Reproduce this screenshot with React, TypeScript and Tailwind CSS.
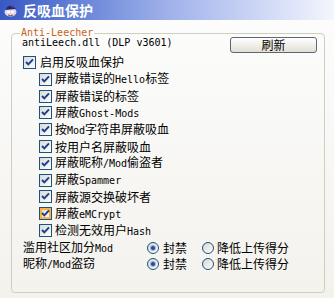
import { useId } from "react"

const subItems = [
  { label: "屏蔽错误的Hello标签" },
  { label: "屏蔽错误的标签" },
  { label: "屏蔽Ghost-Mods" },
  { label: "按Mod字符串屏蔽吸血" },
  { label: "按用户名屏蔽吸血" },
  { label: "屏蔽昵称/Mod偷盗者" },
  { label: "屏蔽Spammer" },
  { label: "屏蔽源交换破坏者" },
  { label: "屏蔽eMCrypt", hover: true },
  { label: "检测无效用户Hash" },
]

// ASCII runs use a narrow mono font, CJK stays at 12px
function Mixed({ text }: { text: string }) {
  const parts = text.split(/([\x20-\x7e]+)/).filter(Boolean)
  return (
    <>
      {parts.map((p, i) =>
        /[\x20-\x7e]/.test(p[0]) ? (
          <span key={i} className="font-['DejaVu_Sans_Mono',monospace] text-[10px] leading-[12px]">
            {p}
          </span>
        ) : (
          <span key={i}>{p}</span>
        )
      )}
    </>
  )
}

function CheckBox({ hover = false }: { hover?: boolean }) {
  const id = useId()
  return (
    <svg width="13" height="13" viewBox="0 0 13 13" className="shrink-0">
      <defs>
        <linearGradient id={id} x1="0" y1="0" x2="1" y2="1">
          <stop offset="0" stopColor="#d8d8d2" />
          <stop offset="1" stopColor="#ffffff" />
        </linearGradient>
      </defs>
      <rect x="0.5" y="0.5" width="12" height="12" fill={`url(#${id})`} stroke="#1c5180" />
      {hover && <rect x="2" y="2" width="9" height="9" fill="none" stroke="#f7b540" strokeWidth="2" />}
      <path d="M3 6 L5.3 8.4 L10 3.4" fill="none" stroke="#213d8f" strokeWidth="2" />
    </svg>
  )
}

function Radio({ checked }: { checked: boolean }) {
  const id = useId()
  return (
    <svg width="12" height="12" viewBox="0 0 12 12" className="shrink-0">
      <defs>
        <linearGradient id={id} x1="0" y1="0" x2="1" y2="1">
          <stop offset="0" stopColor="#d6d6cf" />
          <stop offset="1" stopColor="#ffffff" />
        </linearGradient>
      </defs>
      <circle cx="6" cy="6" r="5.5" fill={`url(#${id})`} stroke="#1c5180" />
      {checked && (
        <>
          <circle cx="6" cy="6" r="3" fill="#9db5de" />
          <circle cx="6" cy="6" r="2" fill="#2a4a92" />
        </>
      )}
    </svg>
  )
}

function RadioRow({ label }: { label: string }) {
  return (
    <div className="flex items-center h-[16px]">
      <div className="w-[135px] pl-[11px]">
        <Mixed text={label} />
      </div>
      <div className="flex items-center gap-[4px] w-[55px]">
        <Radio checked />
        <span>封禁</span>
      </div>
      <div className="flex items-center gap-[3px]">
        <Radio checked={false} />
        <span>降低上传得分</span>
      </div>
    </div>
  )
}

export default function App() {
  return (
    <div className="w-[334px] h-[298px] overflow-hidden bg-gradient-to-b from-[#fdfdfd] to-[#f3f2ed] text-[12px] leading-[12px] text-black font-['Noto_Sans_CJK_SC',sans-serif]">
      {/* Title bar */}
      <div className="h-[20px] flex items-center gap-[5px] pl-[3px] bg-gradient-to-r from-[#3858c4] via-[#9fb1ea] to-[#f4f6fd]">
        <svg width="15" height="14" viewBox="0 0 15 14">
          <ellipse cx="7.5" cy="9" rx="6" ry="4.5" fill="#d9dbe8" />
          <path d="M2 7 Q7 -1 13 6 Z" fill="#2c2470" />
          <circle cx="10" cy="3" r="1.6" fill="#6a3fb0" />
          <ellipse cx="5.5" cy="9" rx="1.6" ry="1.3" fill="#ffffff" />
          <ellipse cx="9.5" cy="9" rx="1.6" ry="1.3" fill="#ffffff" />
          <path d="M5 12 Q7.5 13.5 10 12" stroke="#c43030" strokeWidth="1" fill="none" />
        </svg>
        <span className="text-white font-bold text-[14px] leading-[14px]">反吸血保护</span>
      </div>

      {/* Group box */}
      <div className="pt-[13px] pl-[11px] pr-[9px]">
        <div className="relative h-[260px] border border-[#d0cfbf] rounded-[4px]">
          <span className="absolute -top-[7px] left-[8px] px-[1px] bg-[#fcfcfb] text-[#c5631b] font-['DejaVu_Sans_Mono',monospace] text-[10px] leading-[11px]">
            Anti-Leecher
          </span>

          <div className="flex items-start justify-between pt-[3px] pl-[10px] pr-[7px]">
            <span className="font-['DejaVu_Sans_Mono',monospace] text-[10px] leading-[12px]">
              antiLeech.dll (DLP v3601)
            </span>
            <button className="w-[87px] h-[16px] flex items-center justify-center rounded-[3px] border border-[#5d6672] bg-gradient-to-b from-white to-[#e2dfd4] text-[12px] leading-[12px]">
              刷新
            </button>
          </div>

          <div className="flex items-center gap-[4px] h-[18px] pl-[11px]">
            <CheckBox />
            <span>启用反吸血保护</span>
          </div>

          <div className="flex flex-col pl-[27px]">
            {subItems.map((item) => (
              <div key={item.label} className="flex items-center gap-[3px] h-[16.8px]">
                <CheckBox hover={item.hover} />
                <span>
                  <Mixed text={item.label} />
                </span>
              </div>
            ))}
          </div>

          <div className="flex flex-col mt-[1px]">
            <RadioRow label="滥用社区加分Mod" />
            <RadioRow label="昵称/Mod盗窃" />
          </div>
        </div>
      </div>
    </div>
  )
}
